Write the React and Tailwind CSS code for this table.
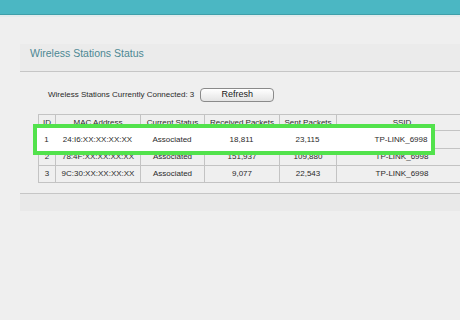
import React from "react";

const cols = [17, 85, 64, 75, 57, 160];
const header = ["ID", "MAC Address", "Current Status", "Received Packets", "Sent Packets", "SSID"];
const rows = [
  ["1", "24:I6:XX:XX:XX:XX", "Associated", "18,811", "23,115", "TP-LINK_6998"],
  ["2", "78:4F:XX:XX:XX:XX", "Associated", "151,937", "109,880", "TP-LINK_6998"],
  ["3", "9C:30:XX:XX:XX:XX", "Associated", "9,077", "22,543", "TP-LINK_6998"],
];
const heights = [16, 18, 17, 17];
const centers = [17, 85, 64, 75, 57, 130];

function Row({ cells, h, hidden }) {
  return (
    <div className="flex border-b border-[#c3c3c3]" style={{ height: h }}>
      {cells.map((c, i) => (
        <div
          key={i}
          className="flex shrink-0 items-center border-r border-[#c3c3c3] text-[8px] leading-none text-[#2a2a2a]"
          style={{ width: cols[i] }}
        >
          <div className="text-center" style={{ width: centers[i] }}>
            {hidden ? "" : c}
          </div>
        </div>
      ))}
    </div>
  );
}

export default function App() {
  return (
    <div
      className="relative h-[320px] w-[460px] overflow-hidden bg-[#efefef]"
      style={{ fontFamily: '"Liberation Sans", Arial, sans-serif' }}
    >
      <div className="h-[15px] border-b border-[#3f9fa9] bg-[#4bb7c3]" />
      <div className="h-[2px] bg-[#e3ebec]" />
      <div className="ml-[20px] mt-[27px] w-[460px]">
        <div className="h-[28px] border-b border-[#c6c6c6] bg-[#ebebeb] pl-[10px] pt-[3px] text-[10.5px] leading-[12px] text-[#4d8893]">
          Wireless Stations Status
        </div>
        <div className="pb-[10px] pl-[18px] pt-[15px]">
          <div className="flex h-[15px] items-center">
            <span className="ml-[10px] text-[8px] text-[#2a2a2a]">
              Wireless Stations Currently Connected: 3
            </span>
            <button className="ml-[6px] flex h-[14px] w-[74px] items-center justify-center rounded-[4px] border border-[#8a8a8a] bg-gradient-to-b from-white to-[#e4e4e4] text-[9px] leading-none text-[#1a1a1a]">
              Refresh
            </button>
          </div>
          <div className="relative mt-[12px]">
            <div className="border-l border-t border-[#c3c3c3]">
              <Row cells={header} h={heights[0]} />
              {rows.map((r, i) => (
                <Row key={i} cells={r} h={heights[i + 1]} hidden={i === 0} />
              ))}
            </div>
            <div className="absolute left-[-5px] top-[10px] flex h-[31px] w-[402px] border-4 border-[#52e24c] bg-white pl-[1px]">
              {rows[0].map((c, i) => (
                <div
                  key={i}
                  className="shrink-0 text-center text-[8px] leading-[23px] text-[#2a2a2a]"
                  style={{ width: i === 5 ? 130 : cols[i] }}
                >
                  {c}
                </div>
              ))}
            </div>
          </div>
        </div>
        <div className="h-[18px] border-t border-[#c6c6c6] bg-[#e9e9e9]" />
      </div>
    </div>
  );
}
